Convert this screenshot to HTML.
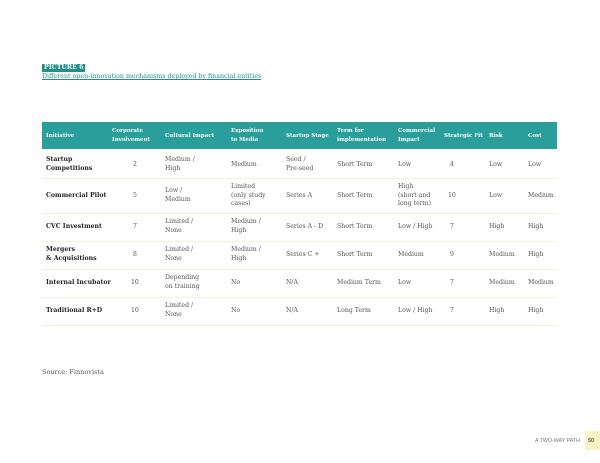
<!DOCTYPE html>
<html><head><style>
*{margin:0;padding:0;box-sizing:border-box}
body{width:600px;height:463px;background:#fff;position:relative;font-family:"DejaVu Serif","Liberation Serif",serif;color:#333;overflow:hidden}
.a{position:absolute;font-size:6.2px;line-height:8.5px;white-space:nowrap}
.h{color:#fff;font-weight:bold;font-size:5.5px}
.b{font-weight:bold;color:#222}
.c{color:#555}
.line{position:absolute;left:42px;width:515px;height:1px;background:#f8f0d2}
</style></head><body>
<div class="a" style="left:42px;top:64px;background:#1f8f8c;color:#fff;font-weight:bold;padding:0 2px;font-size:6.3px;line-height:8px">PICTURE 6</div>
<div class="a" style="left:42px;top:73px;color:#1f8f8c;text-decoration:underline;font-size:6.3px">Different open-innovation mechanisms deployed by financial entities</div>
<div style="position:absolute;left:42px;top:122px;width:515px;height:27px;background:#2a9e9b"></div>
<div class="a h" style="left:46px;top:132px">Initiative</div>
<div class="a h" style="left:112px;top:127px">Corporate<br>Involvement</div>
<div class="a h" style="left:165px;top:132px">Cultural Impact</div>
<div class="a h" style="left:231px;top:127px">Exposition<br>to Media</div>
<div class="a h" style="left:286px;top:132px">Startup Stage</div>
<div class="a h" style="left:337px;top:127px">Term for<br>implementation</div>
<div class="a h" style="left:398px;top:127px">Commercial<br>Impact</div>
<div class="a h" style="left:444px;top:132px">Strategic Fit</div>
<div class="a h" style="left:489px;top:132px">Risk</div>
<div class="a h" style="left:528px;top:132px">Cost</div>

<div class="a b" style="left:46px;top:156px">Startup<br>Competitions</div>
<div class="a c" style="left:133px;top:161px">2</div>
<div class="a c" style="left:165px;top:156px">Medium /<br>High</div>
<div class="a c" style="left:231px;top:161px">Medium</div>
<div class="a c" style="left:286px;top:156px">Seed /<br>Pre-seed</div>
<div class="a c" style="left:337px;top:161px">Short Term</div>
<div class="a c" style="left:398px;top:161px">Low</div>
<div class="a c" style="left:450px;top:161px">4</div>
<div class="a c" style="left:489px;top:161px">Low</div>
<div class="a c" style="left:528px;top:161px">Low</div>
<div class="line" style="top:178px"></div>

<div class="a b" style="left:46px;top:192px">Commercial Pilot</div>
<div class="a c" style="left:133px;top:192px">5</div>
<div class="a c" style="left:165px;top:187px">Low /<br>Medium</div>
<div class="a c" style="left:231px;top:183px">Limited<br>(only study<br>cases)</div>
<div class="a c" style="left:286px;top:192px">Series A</div>
<div class="a c" style="left:337px;top:192px">Short Term</div>
<div class="a c" style="left:398px;top:183px">High<br>(short and<br>long term)</div>
<div class="a c" style="left:448px;top:192px">10</div>
<div class="a c" style="left:489px;top:192px">Low</div>
<div class="a c" style="left:528px;top:192px">Medium</div>
<div class="line" style="top:213px"></div>

<div class="a b" style="left:46px;top:223px">CVC Investment</div>
<div class="a c" style="left:133px;top:223px">7</div>
<div class="a c" style="left:165px;top:218px">Limited /<br>None</div>
<div class="a c" style="left:231px;top:218px">Medium /<br>High</div>
<div class="a c" style="left:286px;top:223px">Series A - D</div>
<div class="a c" style="left:337px;top:223px">Short Term</div>
<div class="a c" style="left:398px;top:223px">Low / High</div>
<div class="a c" style="left:450px;top:223px">7</div>
<div class="a c" style="left:489px;top:223px">High</div>
<div class="a c" style="left:528px;top:223px">High</div>
<div class="line" style="top:241px"></div>

<div class="a b" style="left:46px;top:246px">Mergers<br>&amp; Acquisitions</div>
<div class="a c" style="left:133px;top:251px">8</div>
<div class="a c" style="left:165px;top:246px">Limited /<br>None</div>
<div class="a c" style="left:231px;top:246px">Medium /<br>High</div>
<div class="a c" style="left:286px;top:251px">Series C +</div>
<div class="a c" style="left:337px;top:251px">Short Term</div>
<div class="a c" style="left:398px;top:251px">Medium</div>
<div class="a c" style="left:450px;top:251px">9</div>
<div class="a c" style="left:489px;top:251px">Medium</div>
<div class="a c" style="left:528px;top:251px">High</div>
<div class="line" style="top:269px"></div>

<div class="a b" style="left:46px;top:279px">Internal Incubator</div>
<div class="a c" style="left:131px;top:279px">10</div>
<div class="a c" style="left:165px;top:274px">Depending<br>on training</div>
<div class="a c" style="left:231px;top:279px">No</div>
<div class="a c" style="left:286px;top:279px">N/A</div>
<div class="a c" style="left:337px;top:279px">Medium Term</div>
<div class="a c" style="left:398px;top:279px">Low</div>
<div class="a c" style="left:450px;top:279px">7</div>
<div class="a c" style="left:489px;top:279px">Medium</div>
<div class="a c" style="left:528px;top:279px">Medium</div>
<div class="line" style="top:297px"></div>

<div class="a b" style="left:46px;top:307px">Traditional R+D</div>
<div class="a c" style="left:131px;top:307px">10</div>
<div class="a c" style="left:165px;top:302px">Limited /<br>None</div>
<div class="a c" style="left:231px;top:307px">No</div>
<div class="a c" style="left:286px;top:307px">N/A</div>
<div class="a c" style="left:337px;top:307px">Long Term</div>
<div class="a c" style="left:398px;top:307px">Low / High</div>
<div class="a c" style="left:450px;top:307px">7</div>
<div class="a c" style="left:489px;top:307px">High</div>
<div class="a c" style="left:528px;top:307px">High</div>
<div class="line" style="top:325px"></div>

<div class="a c" style="left:42px;top:368px;font-size:6.5px">Source: Finnovista</div>
<div class="a" style="left:535px;top:437px;font-family:'Liberation Sans',sans-serif;font-size:5.3px;color:#777">A TWO-WAY PATH</div>
<div style="position:absolute;left:585px;top:431px;width:15px;height:19px;background:#fbf3c8"></div>
<div class="a" style="left:588px;top:437px;font-family:'Liberation Sans',sans-serif;font-size:5.5px;font-weight:bold;color:#555">50</div>
</body></html>
